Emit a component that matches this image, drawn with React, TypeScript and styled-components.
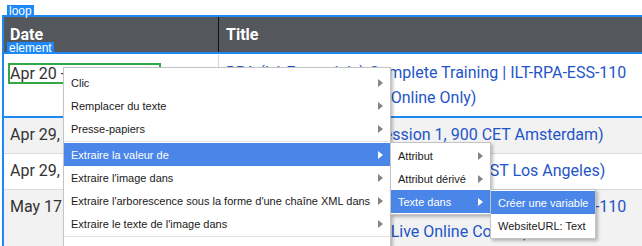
import styled, { createGlobalStyle } from "styled-components";

const GlobalStyle = createGlobalStyle`
  html, body {
    margin: 0;
    padding: 0;
    background: #ffffff;
    overflow: hidden;
  }
`;

const BLUE = "#1e88f5";

const Page = styled.div`
  position: relative;
  width: 642px;
  height: 246px;
  padding: 15px 0 0 2px;
  box-sizing: border-box;
  overflow: hidden;
  font-family: Roboto, "Liberation Sans", sans-serif;
`;

const LoopFrame = styled.div`
  position: relative;
  border-top: 2px solid ${BLUE};
  border-left: 2px solid ${BLUE};
`;

const Badge = styled.span`
  position: absolute;
  top: -12px;
  left: 3px;
  z-index: 2;
  height: 12px;
  padding: 0 2px;
  background: ${BLUE};
  color: #ffffff;
  font-family: "Liberation Sans", Arial, sans-serif;
  font-size: 12px;
  line-height: 12px;
`;

const HeaderRow = styled.div`
  display: grid;
  grid-template-columns: 215px 1fr;
  height: 35px;
  background: #54575c;
`;

const HeadCell = styled.div<{ $first?: boolean }>`
  display: flex;
  align-items: center;
  padding-left: ${({ $first }) => ($first ? "6px" : "7px")};
  border-right: ${({ $first }) => ($first ? "1px solid #111" : "none")};
  color: #ffffff;
  font-size: 16px;
  font-weight: 700;
`;

const Row = styled.div<{ $shade?: boolean; $selected?: boolean }>`
  position: relative;
  display: grid;
  grid-template-columns: 215px 1fr;
  background: ${({ $shade }) => ($shade ? "#f2f2f2" : "#ffffff")};
  border-top: ${({ $selected }) => ($selected ? `2px solid ${BLUE}` : "none")};
  border-bottom: ${({ $selected }) => ($selected ? `2px solid ${BLUE}` : "1px solid #dcdcdc")};
`;

const DateCell = styled.div<{ $top?: number }>`
  padding: ${({ $top = 4 }) => `${$top}px 0 6px 6px`};
  border-right: 1px solid #d8d8d8;
  color: #333333;
  font-size: 16px;
  line-height: 25px;
  white-space: nowrap;
  overflow: hidden;
`;

const Picked = styled.span`
  display: inline-block;
  margin-left: -2px;
  border: 2px solid #33a845;
  line-height: 17px;
`;

const TitleCell = styled.div<{ $top?: number }>`
  padding: ${({ $top = 4 }) => `${$top}px 0 6px 7px`};
  color: #1f55c8;
  font-size: 16px;
  line-height: 25px;
  white-space: nowrap;
  overflow: hidden;
`;

const Menu = styled.div<{ $width: number }>`
  position: absolute;
  width: ${({ $width }) => $width}px;
  box-sizing: border-box;
  background: #ffffff;
  border: 1px solid #c4c4c4;
  box-shadow: 2px 2px 3px rgba(0, 0, 0, 0.25);
  font-family: "Liberation Sans", Arial, sans-serif;
  font-size: 11px;
  color: #1a1a1a;
  z-index: 5;
`;

const ContextMenu = styled(Menu)`
  left: 63px;
  top: 67px;
  padding: 3px 0 20px;
`;

const SubMenu = styled(Menu)`
  left: 100%;
  top: -1px;
  padding: 1px 0;
`;

const Item = styled.div<{ $active?: boolean }>`
  position: relative;
  display: flex;
  align-items: center;
  height: 23px;
  padding: 0 7px;
  white-space: nowrap;
  background: ${({ $active }) => ($active ? "#4a86e8" : "transparent")};
  color: ${({ $active }) => ($active ? "#ffffff" : "#1a1a1a")};
`;

const Arrow = styled.span<{ $active?: boolean }>`
  margin-left: auto;
  width: 0;
  height: 0;
  border-top: 4px solid transparent;
  border-bottom: 4px solid transparent;
  border-left: 5px solid ${({ $active }) => ($active ? "#ffffff" : "#858585")};
`;

const Separator = styled.div`
  height: 1px;
  margin: 1px 0;
  background: #e2e2e2;
`;

const App = () => {
  return (
    <Page>
      <GlobalStyle />
      <LoopFrame>
        <Badge>loop</Badge>
        <HeaderRow>
          <HeadCell $first>Date</HeadCell>
          <HeadCell>Title</HeadCell>
        </HeaderRow>

        <Row $selected>
          <Badge>element</Badge>
          <DateCell $top={7}>
            <Picked>Apr 20 - Apr 20, 2021</Picked>
          </DateCell>
          <TitleCell $top={6}>
            RPA (L1 Essentials) Complete Training | ILT-RPA-ESS-110
            <br />
            Virtual Classroom, EN (Online Only)
          </TitleCell>
        </Row>
        <Row $shade>
          <DateCell>Apr 29, 2021</DateCell>
          <TitleCell>RPA (L1) Essentials (Session 1, 900 CET Amsterdam)</TitleCell>
        </Row>
        <Row>
          <DateCell>Apr 29, 2021</DateCell>
          <TitleCell>RPA L1 Essentials (Session 2, 0900 PST Los Angeles)</TitleCell>
        </Row>
        <Row $shade>
          <DateCell>May 17 - May 18, 2021</DateCell>
          <TitleCell>
            RPA (L1 Essentials) Complete Training | ILT-RPA-ESS-110
            <br />
            (Session 3, English US, Live Online Course)
          </TitleCell>
        </Row>
      </LoopFrame>

      <ContextMenu $width={328}>
        <Item>Clic<Arrow /></Item>
        <Item>Remplacer du texte<Arrow /></Item>
        <Item>Presse-papiers<Arrow /></Item>
        <Separator />
        <Item $active>
          Extraire la valeur de<Arrow $active />
          <SubMenu $width={101}>
            <Item>Attribut<Arrow /></Item>
            <Item>Attribut dérivé<Arrow /></Item>
            <Item $active>
              Texte dans<Arrow $active />
              <SubMenu $width={106}>
                <Item $active>Créer une variable</Item>
                <Item>WebsiteURL: Text</Item>
              </SubMenu>
            </Item>
          </SubMenu>
        </Item>
        <Item>Extraire l'image dans<Arrow /></Item>
        <Item>Extraire l'arborescence sous la forme d'une chaîne XML dans<Arrow /></Item>
        <Item>Extraire le texte de l'image dans<Arrow /></Item>
        <Separator />
      </ContextMenu>
    </Page>
  );
};

export default App;
